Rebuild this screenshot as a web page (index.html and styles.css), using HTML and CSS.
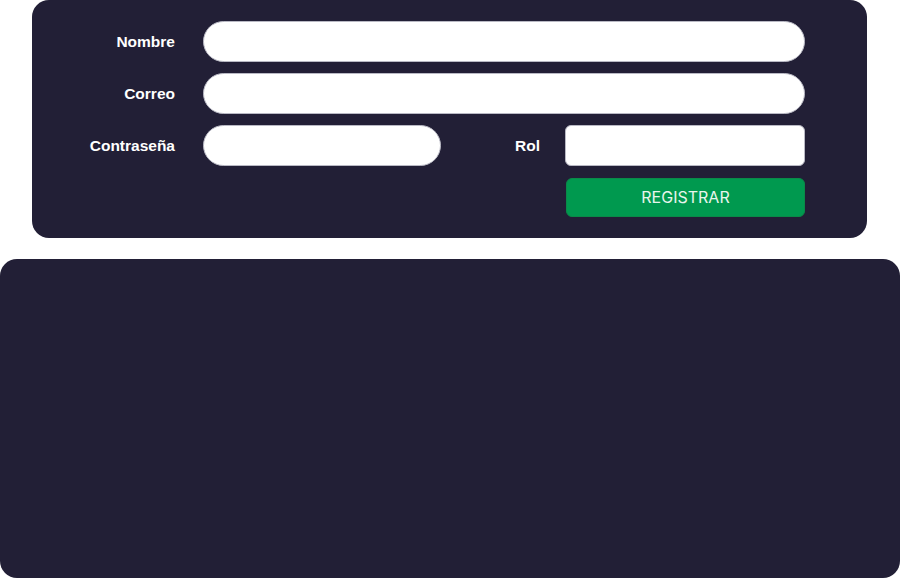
FILE: index.html
```html
<!DOCTYPE html>
<html lang="es">
<head>
<meta charset="utf-8">
<title>Registro</title>
<link rel="stylesheet" href="styles.css">
</head>
<body>
<div class="page">
  <form class="card form-card">
    <label class="label" for="nombre">Nombre</label>
    <input class="field pill wide" id="nombre" type="text">
    <label class="label" for="correo">Correo</label>
    <input class="field pill wide" id="correo" type="email">
    <label class="label" for="pass">Contraseña</label>
    <input class="field pill" id="pass" type="password">
    <div class="rol-group">
      <label class="label" for="rol">Rol</label>
      <input class="field box" id="rol" type="text">
    </div>
    <button class="btn" type="button">REGISTRAR</button>
  </form>
  <section class="card list-card"></section>
</div>
</body>
</html>
```
FILE: styles.css
```css
* { box-sizing: border-box; }
html, body { margin: 0; padding: 0; background: #ffffff; }
body { font-family: "Liberation Sans", Arial, sans-serif; }
.page {
  width: 900px;
  height: 578px;
  display: flex;
  flex-direction: column;
  gap: 21px;
}
.card { background: #221f36; border-radius: 17px; }
.form-card {
  margin: 0 33px 0 32px;
  height: 238px;
  padding: 21px 62px 22px 0;
  display: grid;
  grid-template-columns: 143px 238px 1fr;
  column-gap: 28px;
  row-gap: 11px;
  align-items: center;
  grid-template-rows: 41px 41px 41px 38px;
  align-content: start;
}
.label {
  color: #ffffff;
  font-weight: bold;
  font-size: 15.5px;
  text-align: right;
}
.field {
  height: 41px;
  border: 1px solid #b9b9c4;
  background: #ffffff;
  outline: none;
  margin: 0;
  padding: 0 14px;
}
.pill { border-radius: 21px; }
.wide { grid-column: 2 / 4; }
.box { border-radius: 6px; width: 240px; height: 41px; }
.rol-group {
  display: flex;
  align-items: center;
  justify-content: flex-end;
  gap: 25px;
}
.btn {
  grid-column: 3;
  justify-self: end;
  width: 239px;
  height: 39px;
  margin-top: 2px;
  border: 1px solid #0a8a48;
  border-radius: 6px;
  background: #00994f;
  color: #e8f5ec;
  font-family: Inter, "Liberation Sans", sans-serif;
  font-size: 16px;
  font-weight: 400;
}
.list-card { flex: 1; }
```
